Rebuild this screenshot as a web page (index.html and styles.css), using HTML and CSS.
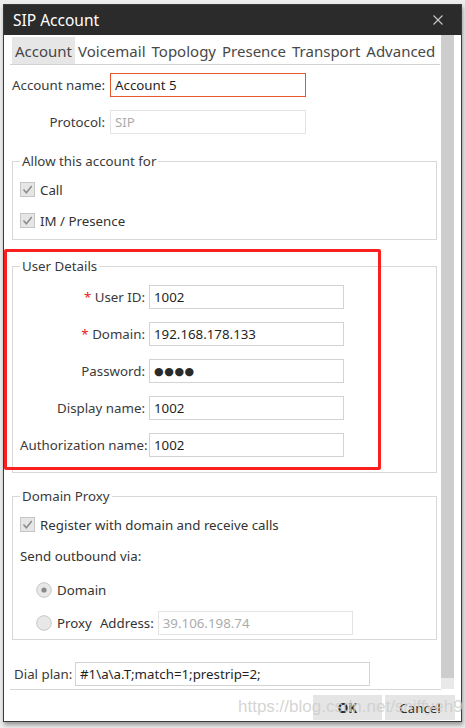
FILE: index.html
```html
<!DOCTYPE html>
<html>
<head>
<meta charset="utf-8">
<link rel="stylesheet" href="styles.css">
</head>
<body>
<div class="dialog">
  <div class="titlebar">
    <span class="title">SIP Account</span>
    <svg class="close" width="10" height="10" viewBox="0 0 10 10"><path d="M0.5 0.5 L9.5 9.5 M9.5 0.5 L0.5 9.5" stroke="#c9c9c9" stroke-width="1.1" fill="none"/></svg>
  </div>
  <div class="main">
    <div class="content">
      <div class="tabs">
        <span class="tab active">Account</span>
        <span class="tab">Voicemail</span>
        <span class="tab">Topology</span>
        <span class="tab">Presence</span>
        <span class="tab">Transport</span>
        <span class="tab">Advanced</span>
      </div>
      <div class="frow r-account">
        <span class="lbl w-top">Account name:</span>
        <div class="input w-top-in focus">Account 5</div>
      </div>
      <div class="frow r-protocol">
        <span class="lbl w-top">Protocol:</span>
        <div class="input w-top-in disabled">SIP</div>
      </div>

      <fieldset class="group g-allow">
        <legend>Allow this account for</legend>
        <div class="crow">
          <svg class="cb" width="15" height="15" viewBox="0 0 15 15"><rect x="0.5" y="0.5" width="14" height="14" fill="#e6e6e6" stroke="#c6c6c6"/><path d="M3.5 7.5 L6.3 10.8 L11.8 4" stroke="#8c8c8c" stroke-width="1.5" fill="none"/></svg>
          <span>Call</span>
        </div>
        <div class="crow">
          <svg class="cb" width="15" height="15" viewBox="0 0 15 15"><rect x="0.5" y="0.5" width="14" height="14" fill="#e6e6e6" stroke="#c6c6c6"/><path d="M3.5 7.5 L6.3 10.8 L11.8 4" stroke="#8c8c8c" stroke-width="1.5" fill="none"/></svg>
          <span>IM / Presence</span>
        </div>
      </fieldset>

      <fieldset class="group g-user">
        <legend>User Details</legend>
        <div class="urow"><span class="lbl w-user"><span class="req">*</span> User ID:</span><div class="input w-user-in">1002</div></div>
        <div class="urow"><span class="lbl w-user"><span class="req">*</span> Domain:</span><div class="input w-user-in">192.168.178.133</div></div>
        <div class="urow"><span class="lbl w-user">Password:</span><div class="input w-user-in"><span class="dots">●●●●</span></div></div>
        <div class="urow"><span class="lbl w-user">Display name:</span><div class="input w-user-in">1002</div></div>
        <div class="urow"><span class="lbl w-user">Authorization name:</span><div class="input w-user-in">1002</div></div>
      </fieldset>

      <fieldset class="group g-proxy">
        <legend>Domain Proxy</legend>
        <div class="crow">
          <svg class="cb" width="15" height="15" viewBox="0 0 15 15"><rect x="0.5" y="0.5" width="14" height="14" fill="#e6e6e6" stroke="#c6c6c6"/><path d="M3.5 7.5 L6.3 10.8 L11.8 4" stroke="#8c8c8c" stroke-width="1.5" fill="none"/></svg>
          <span>Register with domain and receive calls</span>
        </div>
        <div class="trow">Send outbound via:</div>
        <div class="rrow r-domain">
          <svg class="rb" width="16" height="16" viewBox="0 0 16 16"><circle cx="8" cy="8" r="7.3" fill="#e8e8e8" stroke="#c6c6c6"/><circle cx="8" cy="8" r="2.6" fill="#8a8a8a"/></svg>
          <span>Domain</span>
        </div>
        <div class="rrow r-proxy">
          <svg class="rb" width="16" height="16" viewBox="0 0 16 16"><circle cx="8" cy="8" r="7.3" fill="#e8e8e8" stroke="#c6c6c6"/></svg>
          <span>Proxy</span>
          <span class="addr">Address:</span>
          <div class="input w-proxy-in disabled">39.106.198.74</div>
        </div>
      </fieldset>

      <div class="frow r-dial">
        <span class="lbl dial-lbl">Dial plan:</span>
        <div class="input w-dial-in">#1\a\a.T;match=1;prestrip=2;</div>
      </div>
    </div>
    <div class="scrollbar"><div class="thumb"></div><div class="track-end"></div></div>
    <div class="rgap"></div>
  </div>
  <div class="sep"></div>
  <div class="footer">
    <button class="btn ok">OK</button>
    <button class="btn">Cancel</button>
  </div>
</div>
<div class="annot"></div>
<div class="watermark">https://blog.csdn.net/sniffyeh9</div>
</body>
</html>
```
FILE: styles.css
```css
html, body {
  margin: 0;
  padding: 0;
}
body {
  width: 465px;
  height: 728px;
  background: #ececec;
  font-family: "Noto Sans", "Open Sans", sans-serif;
  font-size: 13.3px;
  color: #333;
  position: relative;
  overflow: hidden;
}
.dialog {
  margin: 4px 0 0 3px;
  width: 459px;
  height: 718px;
  box-sizing: border-box;
  border: 1px solid #3a3a3a;
  background: #fff;
  display: flex;
  flex-direction: column;
  box-shadow: 1px 3px 4px rgba(0, 0, 0, 0.35);
}
.titlebar {
  height: 30px;
  background: #2b2b2b;
  display: flex;
  align-items: center;
  padding-left: 9px;
  padding-right: 18px;
  flex: none;
}
.title {
  color: #fff;
  font-size: 15.5px;
  flex: 1;
}
.close {
  display: block;
}
.main {
  height: 654px;
  display: flex;
  flex: none;
}
.content {
  width: 437px;
  display: flex;
  flex-direction: column;
}
.scrollbar {
  width: 13px;
  display: flex;
  flex-direction: column;
}
.thumb {
  height: 643px;
  background: #cdcdcd;
}
.track-end {
  flex: 1;
  background: #e9e9e9;
}
.rgap {
  width: 7px;
}
.tabs {
  margin: 1px 1px 0 6px;
  padding-left: 2px;
  height: 29px;
  box-sizing: border-box;
  border-bottom: 1px solid #d2d2d2;
  display: flex;
  align-items: flex-end;
}
.tab {
  height: 27px;
  padding: 2px 3px 0 3px;
  box-sizing: border-box;
  font-size: 15px;
  color: #484848;
  display: flex;
  align-items: center;
  line-height: 1;
}
.tab.active {
  background: #e6e6e6;
}
.frow {
  display: flex;
  align-items: center;
  height: 24px;
}
.r-account {
  margin: 8px 0 0 8px;
  gap: 5px;
}
.r-protocol {
  margin: 13px 0 0 8px;
  gap: 5px;
}
.lbl {
  text-align: right;
  white-space: nowrap;
  color: #3a3a3a;
}
.w-top {
  width: 93px;
}
.input {
  box-sizing: border-box;
  height: 24px;
  border: 1px solid #d3d3d3;
  padding: 0 4px;
  display: flex;
  align-items: center;
  color: #1f1f1f;
  white-space: nowrap;
  overflow: hidden;
}
.input.focus {
  border-color: #e8572a;
}
.input.disabled {
  border-color: #e4e4e4;
  color: #acacac;
}
.w-top-in {
  width: 196px;
}
.group {
  margin: 17px 0 0 8px;
  width: 425px;
  box-sizing: border-box;
  border: 1px solid #d8d8d8;
  padding: 3px 7px 3px 7px;
  min-width: 0;
}
.group legend {
  padding: 0 2px;
  line-height: 20px;
  color: #3a3a3a;
}
.crow {
  height: 31px;
  display: flex;
  align-items: center;
  gap: 5px;
}
.cb, .rb {
  display: block;
  flex: none;
}
.g-user {
  margin-top: 16px;
  padding: 9px 7px 15px 7px;
  display: flex;
  flex-direction: column;
  gap: 13px;
}
.urow {
  display: flex;
  align-items: center;
  height: 24px;
  gap: 4px;
}
.w-user {
  width: 125px;
}
.w-user-in {
  width: 195px;
}
.req {
  color: #e81b1b;
}
.dots {
  font-family: "DejaVu Sans", sans-serif;
  font-size: 11px;
  letter-spacing: 0.6px;
  color: #2a2a2a;
}
.g-proxy {
  margin-top: 13px;
  padding: 3px 7px 1px 7px;
}
.trow {
  height: 32px;
  display: flex;
  align-items: center;
}
.rrow {
  display: flex;
  align-items: center;
  padding-left: 16px;
  gap: 5px;
}
.r-domain {
  height: 36px;
}
.r-proxy {
  height: 30px;
}
.addr {
  margin-left: 3px;
}
.w-proxy-in {
  width: 195px;
  margin-left: -1px;
}
.r-dial {
  margin: 22px 0 0 10px;
  gap: 3px;
}
.dial-lbl {
  width: 58px;
  text-align: left;
}
.w-dial-in {
  width: 295px;
}
.sep {
  height: 1px;
  margin: 0 20px 0 6px;
  background: #d6d6d6;
  flex: none;
}
.footer {
  flex: 1;
  display: flex;
  justify-content: flex-end;
  align-items: flex-start;
  padding: 5px 6px 0 0;
  gap: 3px;
}
.btn {
  height: 25px;
  width: 70px;
  border: none;
  background: #e5e5e5;
  font-family: "Noto Sans", "Open Sans", sans-serif;
  font-size: 13.3px;
  color: #2a2a2a;
  padding: 0;
}
.btn.ok {
  width: 69px;
  font-weight: 700;
}
.annot {
  position: absolute;
  left: 4px;
  top: 249px;
  width: 377px;
  height: 221px;
  box-sizing: border-box;
  border: 3px solid #fb2020;
  border-radius: 2px;
}
.watermark {
  position: absolute;
  left: 238px;
  top: 697px;
  font-family: "Liberation Sans", sans-serif;
  font-size: 17px;
  color: rgba(205, 205, 205, 0.85);
  white-space: nowrap;
}
```
